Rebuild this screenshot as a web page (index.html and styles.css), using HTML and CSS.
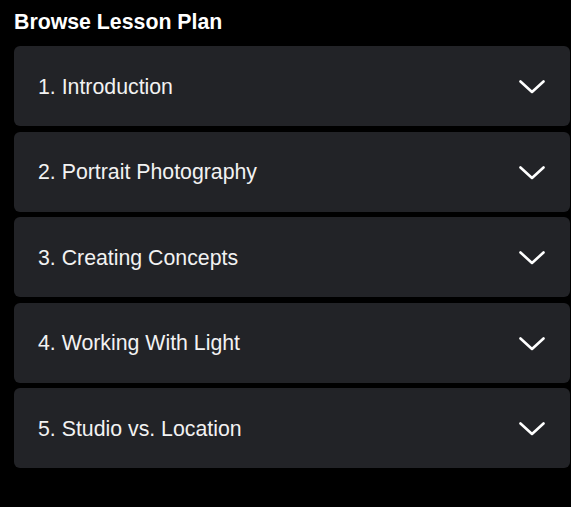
FILE: index.html
```html
<!DOCTYPE html>
<html>
<head>
<meta charset="utf-8">
<link rel="stylesheet" href="styles.css">
</head>
<body>
<section class="plan">
  <h2 class="plan-title">Browse Lesson Plan</h2>
  <div class="list">
    <div class="item"><span class="label">1. Introduction</span><svg class="chev" viewBox="0 0 26 14"><path d="M1.5 1.5 L13 12 L24.5 1.5"/></svg></div>
    <div class="item"><span class="label">2. Portrait Photography</span><svg class="chev" viewBox="0 0 26 14"><path d="M1.5 1.5 L13 12 L24.5 1.5"/></svg></div>
    <div class="item"><span class="label">3. Creating Concepts</span><svg class="chev" viewBox="0 0 26 14"><path d="M1.5 1.5 L13 12 L24.5 1.5"/></svg></div>
    <div class="item"><span class="label">4. Working With Light</span><svg class="chev" viewBox="0 0 26 14"><path d="M1.5 1.5 L13 12 L24.5 1.5"/></svg></div>
    <div class="item"><span class="label">5. Studio vs. Location</span><svg class="chev" viewBox="0 0 26 14"><path d="M1.5 1.5 L13 12 L24.5 1.5"/></svg></div>
  </div>
</section>
</body>
</html>
```
FILE: styles.css
```css
html, body {
  margin: 0;
  background: #000;
}
body {
  font-family: "Liberation Sans", Arial, sans-serif;
  color: #f2f2f2;
}
.plan {
  padding: 9px 1px 0 14px;
}
.plan-title {
  margin: 0 0 11px;
  font-size: 21.3px;
  line-height: 26px;
  font-weight: bold;
  color: #fff;
}
.list {
  display: flex;
  flex-direction: column;
  gap: 5.6px;
}
.item {
  height: 80px;
  box-sizing: border-box;
  background: #222327;
  border-radius: 6px;
  display: flex;
  align-items: center;
  justify-content: space-between;
  padding: 2px 25px 0 24px;
}
.label {
  font-size: 21.3px;
  color: #f2f2f2;
}
.chev {
  width: 26px;
  height: 14px;
  fill: none;
  stroke: #fff;
  stroke-width: 2.6;
  stroke-linecap: round;
  stroke-linejoin: round;
}
```
